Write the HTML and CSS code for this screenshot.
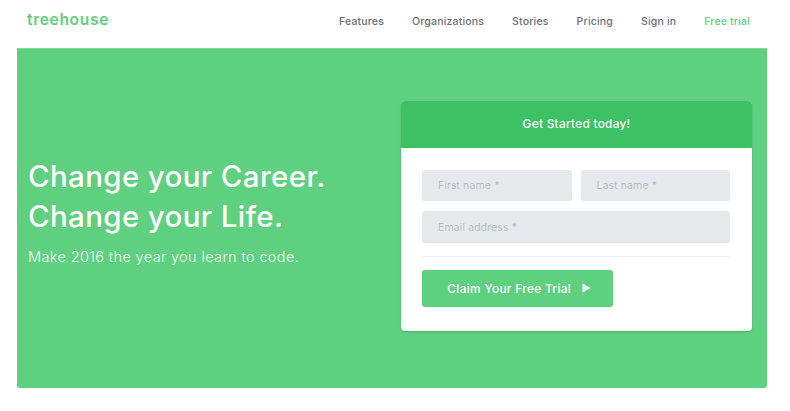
FILE: index.html
```html
<!DOCTYPE html>
<html lang="en">
<head>
<meta charset="utf-8">
<title>Treehouse</title>
<link rel="stylesheet" href="styles.css">
</head>
<body>
<div class="nav">
	<a class="logo" href="#">treehouse</a>
	<ul class="nav-links">
		<li><a href="#">Features</a></li>
		<li><a href="#">Organizations</a></li>
		<li><a href="#">Stories</a></li>
		<li><a href="#">Pricing</a></li>
		<li><a href="#">Sign in</a></li>
		<li><a class="trial" href="#">Free trial</a></li>
	</ul>
</div>
<div class="hero">
	<div class="pitch">
		<h1>Change your Career.<br>Change your Life.</h1>
		<p>Make 2016 the year you learn to code.</p>
	</div>
	<div class="signup">
		<div class="signup-title">Get Started today!</div>
		<form class="signup-form">
			<div class="field-row">
				<input type="text" placeholder="First name *">
				<input type="text" placeholder="Last name *">
			</div>
			<input type="text" placeholder="Email address *">
			<hr>
			<button type="button">Claim Your Free Trial
				<svg width="9" height="10" viewBox="0 0 9 10"><path d="M0.5 0.5L8.5 5L0.5 9.5Z" fill="#fff"/></svg>
			</button>
		</form>
	</div>
</div>
</body>
</html>
```

FILE: styles.css
```css
* {box-sizing: border-box;}
html, body {margin: 0; padding: 0; background: #fff;}
body {
	font-family: "Inter", "Liberation Sans", sans-serif;
	color: #fff;
}
a {text-decoration: none;}

.nav {
	height: 48px;
	display: flex;
	justify-content: space-between;
	align-items: center;
	padding: 0 40px 10px 27px;
}
.logo {
	color: #5fcf80;
	font-size: 15.5px;
	font-weight: 600;
	letter-spacing: 0.7px;
}
.nav-links {
	display: flex;
	gap: 28px;
	list-style: none;
	margin: 0;
	padding: 0;
}
.nav-links a {
	color: #6b7076;
	font-size: 10.5px;
	font-weight: 500;
	letter-spacing: 0.18px;
}
.nav-links a.trial {color: #5fcf80;}

.hero {
	width: 750px;
	height: 340px;
	margin-left: 17px;
	padding: 53px 15px 0 11px;
	display: flex;
	justify-content: space-between;
	align-items: flex-start;
	background: #5fcf80;
	border-top: 1px solid #7ed898;
	border-radius: 0 0 3px 3px;
}
.pitch {padding-top: 54px;}
.pitch h1 {
	margin: 0;
	font-size: 29.5px;
	font-weight: 500;
	line-height: 40px;
	letter-spacing: 0.35px;
}
.pitch p {
	margin: 12px 0 0;
	font-size: 14.5px;
	font-weight: 300;
	letter-spacing: 0.36px;
	color: #f2fbf5;
}

.signup {
	width: 351px;
	height: 230px;
	margin-top: -1px;
	background: #fff;
	border-radius: 4px;
	box-shadow: 0 1px 2px rgba(0, 0, 0, 0.15);
	overflow: hidden;
}
.signup-title {
	height: 47px;
	line-height: 47px;
	text-align: center;
	background: #3cc264;
	font-size: 11.8px;
	font-weight: 500;
	letter-spacing: 0.3px;
}
.signup-form {
	padding: 22px 22px 0 21px;
	display: flex;
	flex-direction: column;
}
.signup-form input {
	height: 32px;
	padding: 0 16px;
	border: 0;
	border-radius: 3px;
	background: #e6e9ec;
	font-family: inherit;
	font-size: 10.5px;
	font-weight: 300;
	letter-spacing: 0.2px;
	outline: none;
}
.signup-form input::placeholder {color: #aeb3b8;}
.field-row {
	display: flex;
	gap: 9px;
	margin-bottom: 10px;
}
.signup-form .field-row input {flex: 1; min-width: 0; height: 31px;}
.signup-form hr {
	width: 100%;
	height: 1px;
	margin: 13px 0;
	border: 0;
	background: #eceef0;
}
.signup-form button {
	width: 191px;
	height: 37px;
	padding: 0 0 0 3px;
	border: 0;
	border-radius: 3px;
	background: #5fcf80;
	color: #fff;
	font-family: inherit;
	font-size: 11.8px;
	font-weight: 500;
	letter-spacing: 0.35px;
}
.signup-form button svg {margin-left: 7px;}
```
